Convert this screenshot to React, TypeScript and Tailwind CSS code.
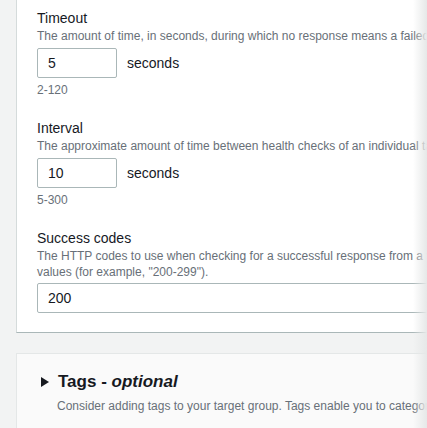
export default function App() {
  const font = { fontFamily: '"Liberation Sans", Arial, sans-serif' }
  return (
    <div
      className="relative w-[427px] h-[428px] overflow-hidden bg-[#f2f3f3]"
      style={font}
    >
      <div className="w-[900px] pl-[16px]">
        {/* Health check settings panel */}
        <div className="bg-white border-l border-[#d5dbdb] border-b border-b-[#aab7b8] pl-[20px] pt-[8px] pb-[19px]">
          <Field
            label="Timeout"
            desc="The amount of time, in seconds, during which no response means a failed health check."
            value="5"
            range="2-120"
          />
          <div className="h-[20px]" />
          <Field
            label="Interval"
            desc="The approximate amount of time between health checks of an individual target."
            value="10"
            range="5-300"
          />
          <div className="h-[20px]" />
          <div className="text-[14px] leading-[20px] text-[#16191f]">Success codes</div>
          <div className="text-[12px] leading-[16px] text-[#687078] whitespace-nowrap">
            The HTTP codes to use when checking for a successful response from a target. You can specify multiple values or a range of
            <br />
            values (for example, "200-299").
          </div>
          <div className="mt-[3px] h-[30px] w-[800px] border border-[#aab7b8] rounded-[2px] flex items-center pl-[10px] text-[14px] text-[#16191f]">
            200
          </div>
        </div>

        {/* Tags panel */}
        <div className="mt-[20px] bg-[#fafafa] border-l border-t border-[#e4e7e7] pl-[23px] pt-[16px] pb-[20px]">
          <div className="flex items-center h-[24px]">
            <svg width="10" height="12" viewBox="0 0 10 12" className="mr-[8px]">
              <polygon points="1,1 9,6 1,11" fill="#16191f" />
            </svg>
            <span className="text-[17px] font-bold text-[#16191f]">
              Tags - <i>optional</i>
            </span>
          </div>
          <div className="mt-[3px] pl-[17px] text-[12px] leading-[18px] text-[#687078] whitespace-nowrap">
            Consider adding tags to your target group. Tags enable you to categorize your AWS resources so you can more easily manage them.
          </div>
        </div>
      </div>
      <div className="absolute top-0 right-0 h-full w-[14px] bg-gradient-to-r from-transparent to-[#e6e8e8]" />
    </div>
  )
}

function Field({ label, desc, value, range }: { label: string; desc: string; value: string; range: string }) {
  return (
    <div>
      <div className="text-[14px] leading-[20px] text-[#16191f]">{label}</div>
      <div className="text-[12px] leading-[16px] text-[#687078] whitespace-nowrap">{desc}</div>
      <div className="mt-[4px] flex items-center">
        <div className="h-[30px] w-[80px] border border-[#aab7b8] rounded-[2px] flex items-center pl-[10px] text-[14px] text-[#16191f]">
          {value}
        </div>
        <span className="ml-[10px] text-[14px] text-[#16191f]">seconds</span>
      </div>
      <div className="mt-[4px] text-[12px] leading-[16px] text-[#687078]">{range}</div>
    </div>
  )
}
